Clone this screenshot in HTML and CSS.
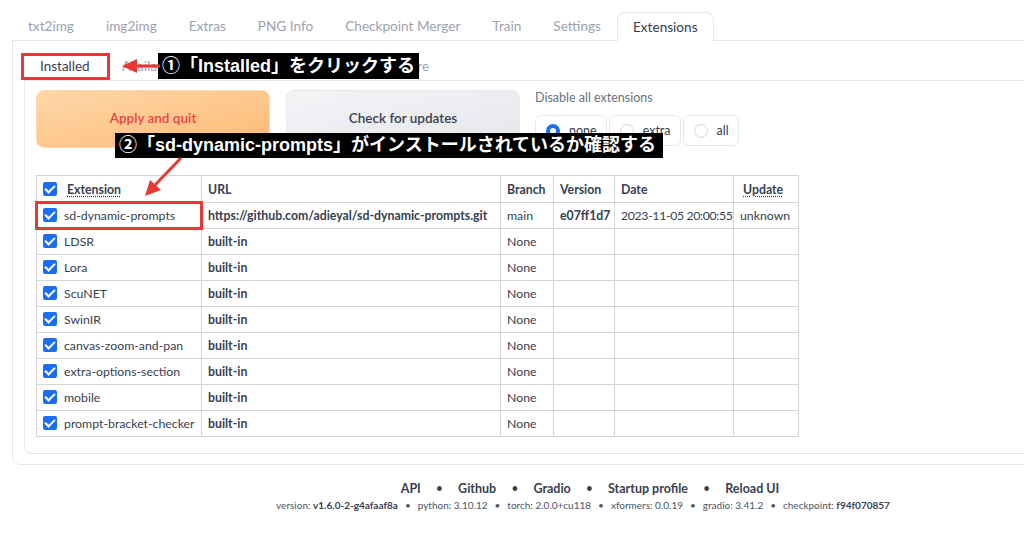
FILE: index.html
```html
<!DOCTYPE html>
<html lang="ja">
<head>
<meta charset="utf-8">
<title>Extensions</title>
<link rel="stylesheet" href="styles.css">
</head>
<body>
<div class="app">
  <nav class="tabs">
    <span class="tab">txt2img</span>
    <span class="tab">img2img</span>
    <span class="tab">Extras</span>
    <span class="tab">PNG Info</span>
    <span class="tab">Checkpoint Merger</span>
    <span class="tab">Train</span>
    <span class="tab">Settings</span>
    <span class="tab tab-active">Extensions</span>
  </nav>
  <section class="panel">
    <nav class="subtabs">
      <span class="subtab subtab-active">Installed</span>
      <span class="subtab">Available</span>
      <span class="subtab">Install from URL</span>
      <span class="subtab">Backup/Restore</span>
    </nav>
    <div class="inner">
      <div class="controls">
        <button class="btn btn-primary">Apply and quit</button>
        <button class="btn btn-secondary">Check for updates</button>
        <div class="disable">
          <div class="disable-label">Disable all extensions</div>
          <div class="radios">
            <label class="radio"><span class="dot dot-on"></span>none</label>
            <label class="radio"><span class="dot"></span>extra</label>
            <label class="radio"><span class="dot"></span>all</label>
          </div>
        </div>
      </div>
      <table class="ext">
        <colgroup>
          <col class="c1"><col class="c2"><col class="c3"><col class="c4"><col class="c5"><col class="c6">
        </colgroup>
        <thead>
          <tr>
            <th><span class="cb"></span><abbr class="dotted">Extension</abbr></th>
            <th>URL</th>
            <th>Branch</th>
            <th>Version</th>
            <th>Date</th>
            <th><abbr class="dotted">Update</abbr></th>
          </tr>
        </thead>
        <tbody>
          <tr><td><span class="cb"></span>sd-dynamic-prompts</td><td class="b">https://github.com/adieyal/sd-dynamic-prompts.git</td><td>main</td><td class="b">e07ff1d7</td><td class="date">2023-11-05 20:00:55</td><td>unknown</td></tr>
          <tr><td><span class="cb"></span>LDSR</td><td class="b">built-in</td><td>None</td><td></td><td></td><td></td></tr>
          <tr><td><span class="cb"></span>Lora</td><td class="b">built-in</td><td>None</td><td></td><td></td><td></td></tr>
          <tr><td><span class="cb"></span>ScuNET</td><td class="b">built-in</td><td>None</td><td></td><td></td><td></td></tr>
          <tr><td><span class="cb"></span>SwinIR</td><td class="b">built-in</td><td>None</td><td></td><td></td><td></td></tr>
          <tr><td><span class="cb"></span>canvas-zoom-and-pan</td><td class="b">built-in</td><td>None</td><td></td><td></td><td></td></tr>
          <tr><td><span class="cb"></span>extra-options-section</td><td class="b">built-in</td><td>None</td><td></td><td></td><td></td></tr>
          <tr><td><span class="cb"></span>mobile</td><td class="b">built-in</td><td>None</td><td></td><td></td><td></td></tr>
          <tr><td><span class="cb"></span>prompt-bracket-checker</td><td class="b">built-in</td><td>None</td><td></td><td></td><td></td></tr>
        </tbody>
      </table>
    </div>
  </section>
  <footer class="footer">
    <div class="links">
      <a>API</a><span class="sep">•</span><a>Github</a><span class="sep">•</span><a>Gradio</a><span class="sep">•</span><a>Startup profile</a><span class="sep">•</span><a>Reload UI</a>
    </div>
    <div class="versions">
      version: <b>v1.6.0-2-g4afaaf8a</b><span class="vsep">•</span>python: 3.10.12<span class="vsep">•</span>torch: 2.0.0+cu118<span class="vsep">•</span>xformers: 0.0.19<span class="vsep">•</span>gradio: 3.41.2<span class="vsep">•</span>checkpoint: <b>f94f070857</b>
    </div>
  </footer>

  <div class="mark mark-installed"></div>
  <div class="mark mark-row"></div>
  <div class="note note-1">①「Installed」をクリックする</div>
  <div class="note note-2">②「sd-dynamic-prompts」がインストールされているか確認する</div>
  <svg class="arrows" width="1024" height="558" viewBox="0 0 1024 558" aria-hidden="true">
    <line x1="160" y1="66" x2="134" y2="66" stroke="#e53935" stroke-width="3"/>
    <polygon points="122,66 137,59 137,73" fill="#e53935"/>
    <line x1="181" y1="158" x2="155" y2="185" stroke="#e53935" stroke-width="3"/>
    <polygon points="145,196 150,180 161,190" fill="#e53935"/>
  </svg>
</div>
</body>
</html>
```

FILE: styles.css
```css
html, body {
  margin: 0;
  padding: 0;
  background: #fff;
  overflow: hidden;
}
.app {
  position: relative;
  width: 1166px;
  height: 558px;
  font-family: "Source Sans Pro", Lato, "Noto Sans CJK JP", sans-serif;
  color: #374151;
}
.tabs {
  display: flex;
  padding: 12px 0 0 12px;
  height: 28px;
}
.tab {
  padding: 0 16px;
  font-size: 13.6px;
  line-height: 29px;
  color: #9ca3af;
  white-space: nowrap;
}
.tab-active {
  color: #374151;
  border: 1px solid #e5e7eb;
  border-bottom: none;
  border-radius: 8px 8px 0 0;
  background: #fff;
  padding: 0 15px;
  margin-left: 0;
  height: 29px;
  box-sizing: border-box;
  line-height: 28px;
}
.panel {
  margin-left: 12px;
  width: 1150px;
  border: 1px solid #e5e7eb;
  border-radius: 0 0 8px 8px;
  padding: 12px 11px 9px 11px;
  box-sizing: border-box;
  height: 425px;
}
.subtabs {
  display: flex;
  height: 27px;
  border-bottom: 1px solid #e5e7eb;
}
.subtab {
  padding: 0 16px;
  font-size: 13.5px;
  line-height: 26px;
  color: #9ca3af;
  white-space: nowrap;
}
.subtab-active {
  color: #374151;
  background: #fff;
}
.inner {
  border: 1px solid #e5e7eb;
  border-top: none;
  border-radius: 0 0 8px 8px;
  padding: 9px 11px 15px 11px;
  height: 373px;
  box-sizing: border-box;
}
.controls {
  display: flex;
  gap: 15px;
  align-items: stretch;
  height: 58px;
}
.btn {
  font-family: inherit;
  font-size: 13.5px;
  font-weight: 600;
  border-radius: 8px;
  width: 234px;
  border: 1px solid #e5e7eb;
  cursor: pointer;
  padding-bottom: 3px;
}
.btn-primary {
  background: linear-gradient(to bottom right, #fed7aa, #fdba74);
  border-color: #fed7aa;
  color: #ef4444;
}
.btn-secondary {
  background: linear-gradient(to bottom right, #f3f4f6, #e5e7eb);
  color: #374151;
  margin-left: 1px;
}
.disable-label {
  font-size: 12.5px;
  color: #6b7280;
  line-height: 16px;
  margin-bottom: 9px;
}
.radios {
  display: flex;
  gap: 2px;
}
.radio {
  display: flex;
  align-items: center;
  gap: 9px;
  height: 31px;
  box-sizing: border-box;
  border: 1px solid #e5e7eb;
  border-radius: 6px;
  padding: 0 9px 0 10px;
  font-size: 12.5px;
  color: #374151;
}
.dot {
  width: 14px;
  height: 14px;
  border-radius: 50%;
  border: 1px solid #d1d5db;
  box-sizing: border-box;
  background: #fff;
}
.dot-on {
  border: 4px solid #1a6ef5;
}
.ext {
  margin-top: 27px;
  border-collapse: collapse;
  width: 762px;
  font-size: 12.3px;
  table-layout: fixed;
}
.c1 { width: 165px; }
.c2 { width: 299px; }
.c3 { width: 53px; }
.c4 { width: 61px; }
.c5 { width: 119px; }
.c6 { width: 65px; }
.ext th, .ext td {
  border: 1px solid #d4d4d4;
  height: 26px;
  padding: 0 6px;
  text-align: left;
  white-space: nowrap;
  box-sizing: border-box;
  vertical-align: middle;
  overflow: hidden;
}
.ext th {
  font-weight: 700;
  height: 27px;
}
.ext td.b {
  font-weight: 700;
}
.ext td.date {
  letter-spacing: -0.35px;
  padding: 0 4px 0 6px;
}
.cb {
  display: inline-block;
  width: 14px;
  height: 14px;
  border-radius: 2px;
  background: #1a6ef5;
  vertical-align: -2px;
  margin-right: 7px;
  position: relative;
}
.cb::after {
  content: "";
  position: absolute;
  left: 4px;
  top: 1px;
  width: 4px;
  height: 8px;
  border: solid #fff;
  border-width: 0 2px 2px 0;
  transform: rotate(45deg);
}
.dotted {
  text-decoration: underline dotted;
  text-underline-offset: 2px;
}
.ext th .dotted { margin-left: 3px; }
.footer {
  text-align: center;
  margin-top: 15px;
}
.links {
  font-size: 12.5px;
  font-weight: 700;
  color: #374151;
  line-height: 17px;
  padding-left: 14px;
}
.links a { color: #374151; }
.sep {
  margin: 0 15px;
  font-weight: 400;
}
.versions {
  font-size: 10px;
  color: #4b5563;
  line-height: 16px;
}
.versions b { font-weight: 700; color: #374151; }
.vsep { margin: 0 7px; }

/* annotations */
.mark {
  position: absolute;
  border: 3px solid #e53935;
  box-sizing: border-box;
}
.mark-installed { left: 21px; top: 53px; width: 89px; height: 27px; }
.mark-row { left: 35px; top: 201px; width: 168px; height: 29px; }
.note {
  position: absolute;
  background: #000;
  color: #fff;
  font-family: "Liberation Sans", "Noto Sans CJK JP", sans-serif;
  font-weight: 700;
  font-size: 18px;
  padding: 0 4px;
  white-space: nowrap;
  box-sizing: border-box;
}
.note-1 { left: 158px; top: 53px; width: 261px; height: 26px; line-height: 26px; }
.note-2 { left: 115px; top: 133px; width: 548px; height: 25px; line-height: 25px; }
.arrows {
  position: absolute;
  left: 0;
  top: 0;
  pointer-events: none;
}
```
